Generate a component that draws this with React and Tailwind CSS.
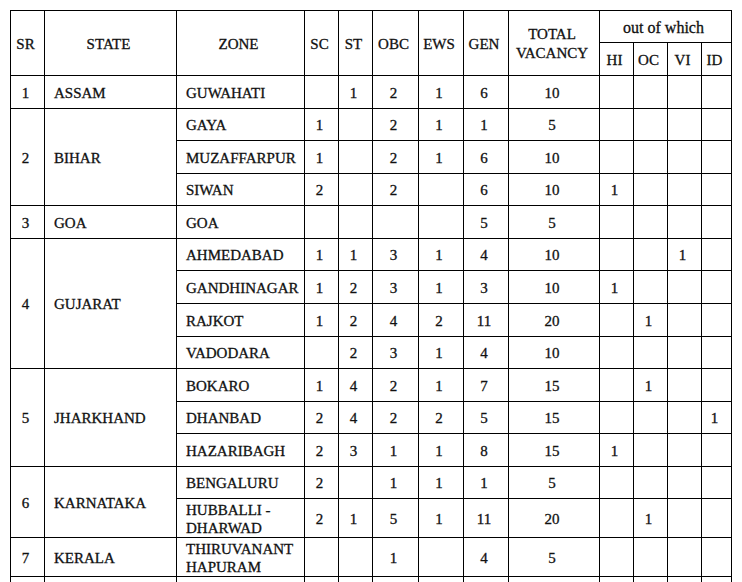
const heights = {
  32: "h-[32px]",
  33: "h-[33px]",
  38: "h-[38px]",
  39: "h-[39px]",
};

// zone rows grouped by state: [zone, sc, st, obc, ews, gen, total, hi, oc, vi, id, rowHeight]
const states = [
  {
    sr: 1,
    name: "ASSAM",
    zones: [["GUWAHATI", "", 1, 2, 1, 6, 10, "", "", "", "", 33]],
  },
  {
    sr: 2,
    name: "BIHAR",
    zones: [
      ["GAYA", 1, "", 2, 1, 1, 5, "", "", "", "", 32],
      ["MUZAFFARPUR", 1, "", 2, 1, 6, 10, "", "", "", "", 33],
      ["SIWAN", 2, "", 2, "", 6, 10, 1, "", "", "", 32],
    ],
  },
  {
    sr: 3,
    name: "GOA",
    zones: [["GOA", "", "", "", "", 5, 5, "", "", "", "", 33]],
  },
  {
    sr: 4,
    name: "GUJARAT",
    zones: [
      ["AHMEDABAD", 1, 1, 3, 1, 4, 10, "", "", 1, "", 32],
      ["GANDHINAGAR", 1, 2, 3, 1, 3, 10, 1, "", "", "", 33],
      ["RAJKOT", 1, 2, 4, 2, 11, 20, "", 1, "", "", 33],
      ["VADODARA", "", 2, 3, 1, 4, 10, "", "", "", "", 32],
    ],
  },
  {
    sr: 5,
    name: "JHARKHAND",
    zones: [
      ["BOKARO", 1, 4, 2, 1, 7, 15, "", 1, "", "", 33],
      ["DHANBAD", 2, 4, 2, 2, 5, 15, "", "", "", 1, 32],
      ["HAZARIBAGH", 2, 3, 1, 1, 8, 15, 1, "", "", "", 33],
    ],
  },
  {
    sr: 6,
    name: "KARNATAKA",
    zones: [
      ["BENGALURU", 2, "", 1, 1, 1, 5, "", "", "", "", 32],
      [["HUBBALLI -", "DHARWAD"], 2, 1, 5, 1, 11, 20, "", 1, "", "", 39],
    ],
  },
  {
    sr: 7,
    name: "KERALA",
    zones: [
      [["THIRUVANANT", "HAPURAM"], "", "", 1, "", 4, 5, "", "", "", "", 38],
    ],
  },
];

const cell = "border-r border-b border-black p-0 pt-[2px] align-middle";
const num = `${cell} text-center pr-1`;
const left = `${cell} text-left pl-[9px]`;

function Zone({ value }) {
  if (Array.isArray(value)) {
    return (
      <span className="block leading-[18px]">
        {value[0]}
        <br />
        {value[1]}
      </span>
    );
  }
  return value;
}

export default function App() {
  return (
    <div className="bg-white w-[742px] h-[582px] overflow-hidden pt-[10px] pl-[10px]">
      <table
        className="table-fixed border-separate border-spacing-0 border-l border-t border-black text-[15px] text-[#111] w-[722px] [-webkit-text-stroke:0.3px_#111]"
        style={{ fontFamily: '"Liberation Serif", "Times New Roman", serif' }}
      >
        <colgroup>
          <col className="w-[34px]" />
          <col className="w-[132px]" />
          <col className="w-[128px]" />
          <col className="w-[34px]" />
          <col className="w-[34px]" />
          <col className="w-[46px]" />
          <col className="w-[45px]" />
          <col className="w-[45px]" />
          <col className="w-[91px]" />
          <col className="w-[34px]" />
          <col className="w-[34px]" />
          <col className="w-[34px]" />
          <col className="w-[30px]" />
        </colgroup>
        <thead>
          <tr className="h-[32px]">
            <th rowSpan={2} className={`${num} font-normal`}>SR</th>
            <th rowSpan={2} className={`${num} font-normal`}>STATE</th>
            <th rowSpan={2} className={`${num} font-normal`}>ZONE</th>
            <th rowSpan={2} className={`${num} font-normal`}>SC</th>
            <th rowSpan={2} className={`${num} font-normal`}>ST</th>
            <th rowSpan={2} className={`${num} font-normal`}>OBC</th>
            <th rowSpan={2} className={`${num} font-normal`}>EWS</th>
            <th rowSpan={2} className={`${num} font-normal`}>GEN</th>
            <th rowSpan={2} className={`${num} font-normal leading-[19px]`}>
              TOTAL
              <br />
              VACANCY
            </th>
            <th colSpan={4} className={`${num} font-normal text-[16px]`}>
              out of which
            </th>
          </tr>
          <tr className="h-[33px]">
            <th className={`${num} font-normal`}>HI</th>
            <th className={`${num} font-normal`}>OC</th>
            <th className={`${num} font-normal`}>VI</th>
            <th className={`${num} font-normal`}>ID</th>
          </tr>
        </thead>
        <tbody>
          {states.map((state) =>
            state.zones.map((z, i) => (
              <tr key={`${state.sr}-${i}`} className={heights[z[11]]}>
                {i === 0 && (
                  <>
                    <td rowSpan={state.zones.length} className={num}>
                      {state.sr}
                    </td>
                    <td rowSpan={state.zones.length} className={left}>
                      {state.name}
                    </td>
                  </>
                )}
                <td className={left}>
                  <Zone value={z[0]} />
                </td>
                {z.slice(1, 11).map((v, j) => (
                  <td key={j} className={num}>
                    {v}
                  </td>
                ))}
              </tr>
            ))
          )}
          <tr className="h-[33px]">
            {Array.from({ length: 13 }).map((_, j) => (
              <td key={j} className={num}></td>
            ))}
          </tr>
        </tbody>
      </table>
    </div>
  );
}
